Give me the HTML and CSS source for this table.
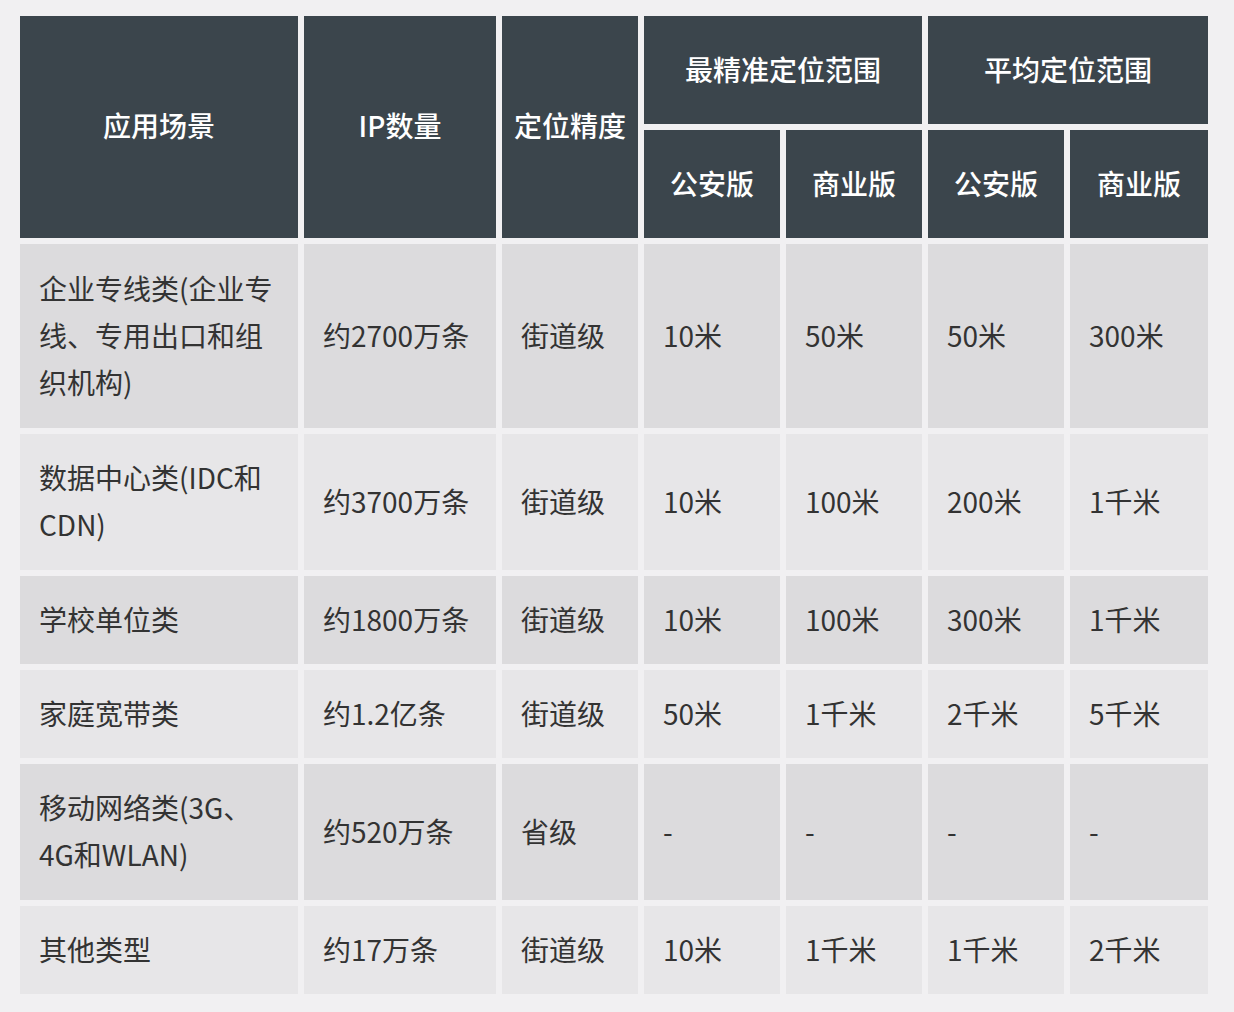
FILE: index.html
```html
<!DOCTYPE html>
<html lang="zh-CN">
<head>
<meta charset="utf-8">
<title>IP定位</title>
<link rel="stylesheet" href="styles.css">
</head>
<body>
<div class="page">
<table class="geo-table">
  <colgroup>
    <col class="c-scene"><col class="c-ip"><col class="c-acc">
    <col class="c-n"><col class="c-n"><col class="c-n"><col class="c-last">
  </colgroup>
  <thead>
    <tr class="hrow">
      <th rowspan="2" class="th-span">应用场景</th>
      <th rowspan="2" class="th-span">IP数量</th>
      <th rowspan="2" class="th-span">定位精度</th>
      <th colspan="2">最精准定位范围</th>
      <th colspan="2">平均定位范围</th>
    </tr>
    <tr class="hrow">
      <th>公安版</th><th>商业版</th><th>公安版</th><th>商业版</th>
    </tr>
  </thead>
  <tbody>
    <tr class="r-dark r-184">
      <td>企业专线类(企业专线、专用出口和组织机构)</td><td>约2700万条</td><td>街道级</td><td>10米</td><td>50米</td><td>50米</td><td>300米</td>
    </tr>
    <tr class="r-light r-136">
      <td>数据中心类(IDC和CDN)</td><td>约3700万条</td><td>街道级</td><td>10米</td><td>100米</td><td>200米</td><td>1千米</td>
    </tr>
    <tr class="r-dark r-88">
      <td>学校单位类</td><td>约1800万条</td><td>街道级</td><td>10米</td><td>100米</td><td>300米</td><td>1千米</td>
    </tr>
    <tr class="r-light r-88">
      <td>家庭宽带类</td><td>约1.2亿条</td><td>街道级</td><td>50米</td><td>1千米</td><td>2千米</td><td>5千米</td>
    </tr>
    <tr class="r-dark r-136">
      <td>移动网络类(3G、4G和WLAN)</td><td>约520万条</td><td>省级</td><td>-</td><td>-</td><td>-</td><td>-</td>
    </tr>
    <tr class="r-light r-88">
      <td>其他类型</td><td>约17万条</td><td>街道级</td><td>10米</td><td>1千米</td><td>1千米</td><td>2千米</td>
    </tr>
  </tbody>
</table>
</div>
</body>
</html>
```
FILE: styles.css
```css
html, body {
  margin: 0;
  padding: 0;
  background: #f1f0f2;
}
.page {
  padding: 10px 0 0 14px;
}
.geo-table {
  table-layout: fixed;
  width: 1200px;
  border-collapse: separate;
  border-spacing: 6px;
  font-family: "Noto Sans CJK SC", "Noto Sans", sans-serif;
  font-size: 28px;
}
.c-scene { width: 278px; }
.c-ip { width: 192px; }
.c-acc { width: 136px; }
.c-n { width: 136px; }
.c-last { width: 138px; }

.hrow { height: 108px; }
.geo-table th {
  background: #3b454c;
  color: #ffffff;
  font-weight: 500;
  text-align: center;
  vertical-align: middle;
  padding: 0 0 2px 0;
  line-height: 40px;
}
.geo-table th.th-span {
  padding-bottom: 4px;
}
.geo-table td {
  color: #333333;
  font-weight: 400;
  text-align: left;
  vertical-align: middle;
  padding: 0 20px 2px 19px;
  line-height: 47px;
}
.r-dark td { background: #dcdbdd; }
.r-light td { background: #e7e6e8; }
.r-184 { height: 184px; }
.r-136 { height: 136px; }
.r-88 { height: 88px; }
```
